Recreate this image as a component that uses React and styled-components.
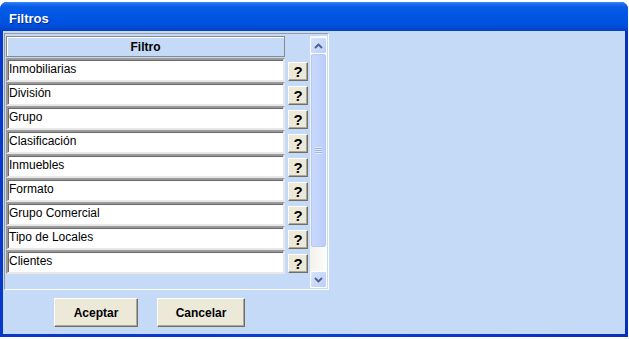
import React from 'react';
import styled, { createGlobalStyle } from 'styled-components';

const GlobalStyle = createGlobalStyle`
	html, body { margin: 0; padding: 0; background: #ffffff; }
	body { font-family: "Liberation Sans", Arial, sans-serif; font-size: 12px; }
	#root { width: 629px; height: 339px; position: relative; overflow: hidden; }
	`;

const Backdrop = styled.div`
	height: 339px;
	background: #ffffff;
	`;

const Window = styled.div`
	position: absolute;
	left: 0;
	top: 2px;
	width: 628px;
	height: 335px;
	box-sizing: border-box;
	display: flex;
	flex-direction: column;
	border-radius: 7px 7px 0 0;
	background: linear-gradient(90deg, #0838c8, #0a3fd0 50%, #0631b8);
	padding: 0 3px 3px 3px;
	`;

const TitleBar = styled.div`
	height: 29px;
	margin: 0 -3px;
	padding: 3px 0 0 9px;
	box-sizing: border-box;
	display: flex;
	align-items: center;
	border-radius: 7px 7px 0 0;
	background: linear-gradient(#3a8cf8 0%, #1f6ff0 6%, #0a5ce6 16%, #0056e4 45%, #0052e0 75%, #0049d3 90%, #0840bf 100%);
	color: #ffffff;
	font-weight: bold;
	font-size: 13px;
	text-shadow: 1px 1px 0 #0a2a8a;
	`;

const Body = styled.div`
	flex: 1;
	background: #c5daf6;
	padding: 2px 1px 0 1px;
	display: flex;
	flex-direction: column;
	`;

const Panel = styled.div`
	width: 325px;
	height: 257px;
	box-sizing: border-box;
	border: 1px solid;
	border-color: #9a9a9a #ffffff #ffffff #9a9a9a;
	padding: 2px 1px 1px 1px;
	display: flex;
	`;

const Grid = styled.div`
	width: 304px;
	display: flex;
	flex-direction: column;
	`;

const HeaderCell = styled.div`
	width: 279px;
	height: 21px;
	box-sizing: border-box;
	border: 1px solid #8a8a8a;
	box-shadow: inset 1px 1px 0 #ffffff;
	background: #c5daf6;
	font-weight: bold;
	font-size: 12px;
	display: flex;
	align-items: center;
	justify-content: center;
	margin-bottom: 1px;
	`;

const Row = styled.div`
	height: 24px;
	display: flex;
	align-items: center;
	`;

const Cell = styled.div`
	width: 279px;
	height: 24px;
	box-sizing: border-box;
	background: #ffffff;
	border: 2px solid;
	border-color: #9a9a9a #e8e8e8 #e8e8e8 #9a9a9a;
	box-shadow: inset 1px 1px 0 #6a6a6a;
	padding: 2px 0 0 1px;
	font-size: 12px;
	line-height: 14px;
	color: #000000;
	`;

const HelpButton = styled.button`
	width: 20px;
	height: 19px;
	margin-left: 3px;
	margin-top: 2px;
	padding: 0;
	box-sizing: border-box;
	background: #ece9d8;
	border: 1px solid;
	border-color: #ffffff #716f64 #716f64 #ffffff;
	box-shadow: inset -1px -1px 0 #aca899;
	font-family: "Liberation Sans", Arial, sans-serif;
	font-weight: bold;
	font-size: 15px;
	line-height: 15px;
	color: #000000;
	`;

const ScrollBar = styled.div`
	width: 17px;
	display: flex;
	flex-direction: column;
	background: linear-gradient(90deg, #f3f1ec, #fefefb);
	padding-top: 1px;
	`;

const ArrowButton = styled.div`
	height: 17px;
	box-sizing: border-box;
	border: 1px solid #ffffff;
	border-radius: 2px;
	background: linear-gradient(135deg, #d8e4fd, #bccffb);
	display: flex;
	align-items: center;
	justify-content: center;
	`;

const Thumb = styled.div`
	height: 193px;
	box-sizing: border-box;
	margin: 0 1px;
	border: 1px solid #b6c9f7;
	border-radius: 2px;
	background: linear-gradient(90deg, #c9d8fc, #bccffb);
	display: flex;
	align-items: center;
	justify-content: center;
	`;

const Grip = styled.div`
	width: 7px;
	height: 7px;
	background: repeating-linear-gradient(#eef3fe 0 1px, #8ca6e6 1px 2px);
	opacity: 0.7;
	`;

const Track = styled.div`
	flex: 1;
	`;

const Footer = styled.div`
	display: flex;
	gap: 19px;
	padding: 8px 0 0 50px;
	`;

const DialogButton = styled.button`
	width: ${props => props.w}px;
	height: 29px;
	box-sizing: border-box;
	background: #ece9d8;
	border: 1px solid;
	border-color: #ffffff #716f64 #716f64 #ffffff;
	box-shadow: inset -1px -1px 0 #aca899;
	font-family: "Liberation Sans", Arial, sans-serif;
	font-weight: bold;
	font-size: 12px;
	color: #000000;
	padding: 0;
	`;

const Chevron = ({ up }) => (
	<svg width="9" height="6" viewBox="0 0 9 6">
		<path d={up ? 'M1 5 L4.5 1.5 L8 5' : 'M1 1 L4.5 4.5 L8 1'} fill="none" stroke="#4d6185" strokeWidth="1.8" />
	</svg>
);

const filters = [
	'Inmobiliarias',
	'División',
	'Grupo',
	'Clasificación',
	'Inmuebles',
	'Formato',
	'Grupo Comercial',
	'Tipo de Locales',
	'Clientes',
];

function App() {
	return (
		<>
			<GlobalStyle />
			<Backdrop />
			<Window>
				<TitleBar>Filtros</TitleBar>
				<Body>
					<Panel>
						<Grid>
							<HeaderCell>Filtro</HeaderCell>
							{ filters.map(f => (
								<Row key={f}>
									<Cell>{f}</Cell>
									<HelpButton>?</HelpButton>
								</Row>
							))}
						</Grid>
						<ScrollBar>
							<ArrowButton><Chevron up /></ArrowButton>
							<Thumb><Grip /></Thumb>
							<Track />
							<ArrowButton><Chevron /></ArrowButton>
						</ScrollBar>
					</Panel>
					<Footer>
						<DialogButton w={84}>Aceptar</DialogButton>
						<DialogButton w={88}>Cancelar</DialogButton>
					</Footer>
				</Body>
			</Window>
		</>
	);
}

export default App;
